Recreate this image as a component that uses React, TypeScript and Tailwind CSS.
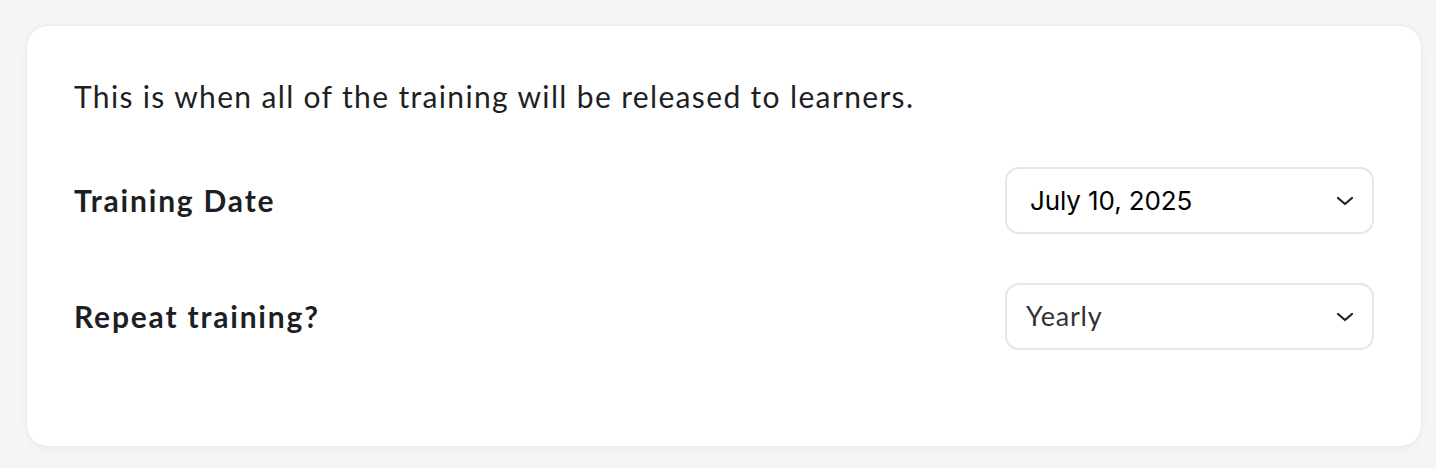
function Chevron() {
  return (
    <svg className="w-[18px] h-[10px] text-[#222]" viewBox="0 0 18 10" fill="none" stroke="currentColor">
      <path d="M2 2l7 6 7-6" strokeWidth={2.2} strokeLinecap="round" strokeLinejoin="round" />
    </svg>
  );
}

interface SelectBoxProps {
  value: string;
  date?: boolean;
}

function SelectBox({ value, date }: SelectBoxProps) {
  return (
    <button className="w-[369px] h-[67px] flex items-center justify-between pl-[19px] pr-[18px] border-2 border-[#e6e6e6] rounded-[14px] bg-white">
      {date ? (
        <span className="pl-[4px] text-[26px] text-black font-['Inter',sans-serif] tracking-[-0.1px]">{value}</span>
      ) : (
        <span className="text-[27px] text-[#333] tracking-[0.8px]">{value}</span>
      )}
      <Chevron />
    </button>
  );
}

export default function App() {
  return (
    <div className="min-h-[468px] bg-[#f5f5f5] pt-[25px] px-[14px] pb-[21px] font-['Lato',sans-serif]">
      <div className="ml-[12px] w-[1396px] h-[422px] bg-white border border-[#ebebeb] rounded-[22px] shadow-[0_2px_8px_rgba(0,0,0,0.04)] px-[47px] pt-[51px]">
        <p className="text-[30px] leading-[38px] tracking-[1.35px] text-[#1d1f24]">
          This is when all of the training will be released to learners.
        </p>
        <div className="mt-[52px] flex flex-col gap-[49px]">
          <div className="flex items-center justify-between">
            <span className="text-[30px] font-bold tracking-[1.8px] text-[#1d1f24]">Training Date</span>
            <SelectBox value="July 10, 2025" date />
          </div>
          <div className="flex items-center justify-between">
            <span className="text-[30px] font-bold tracking-[1.8px] text-[#1d1f24]">Repeat training?</span>
            <SelectBox value="Yearly" />
          </div>
        </div>
      </div>
    </div>
  );
}
